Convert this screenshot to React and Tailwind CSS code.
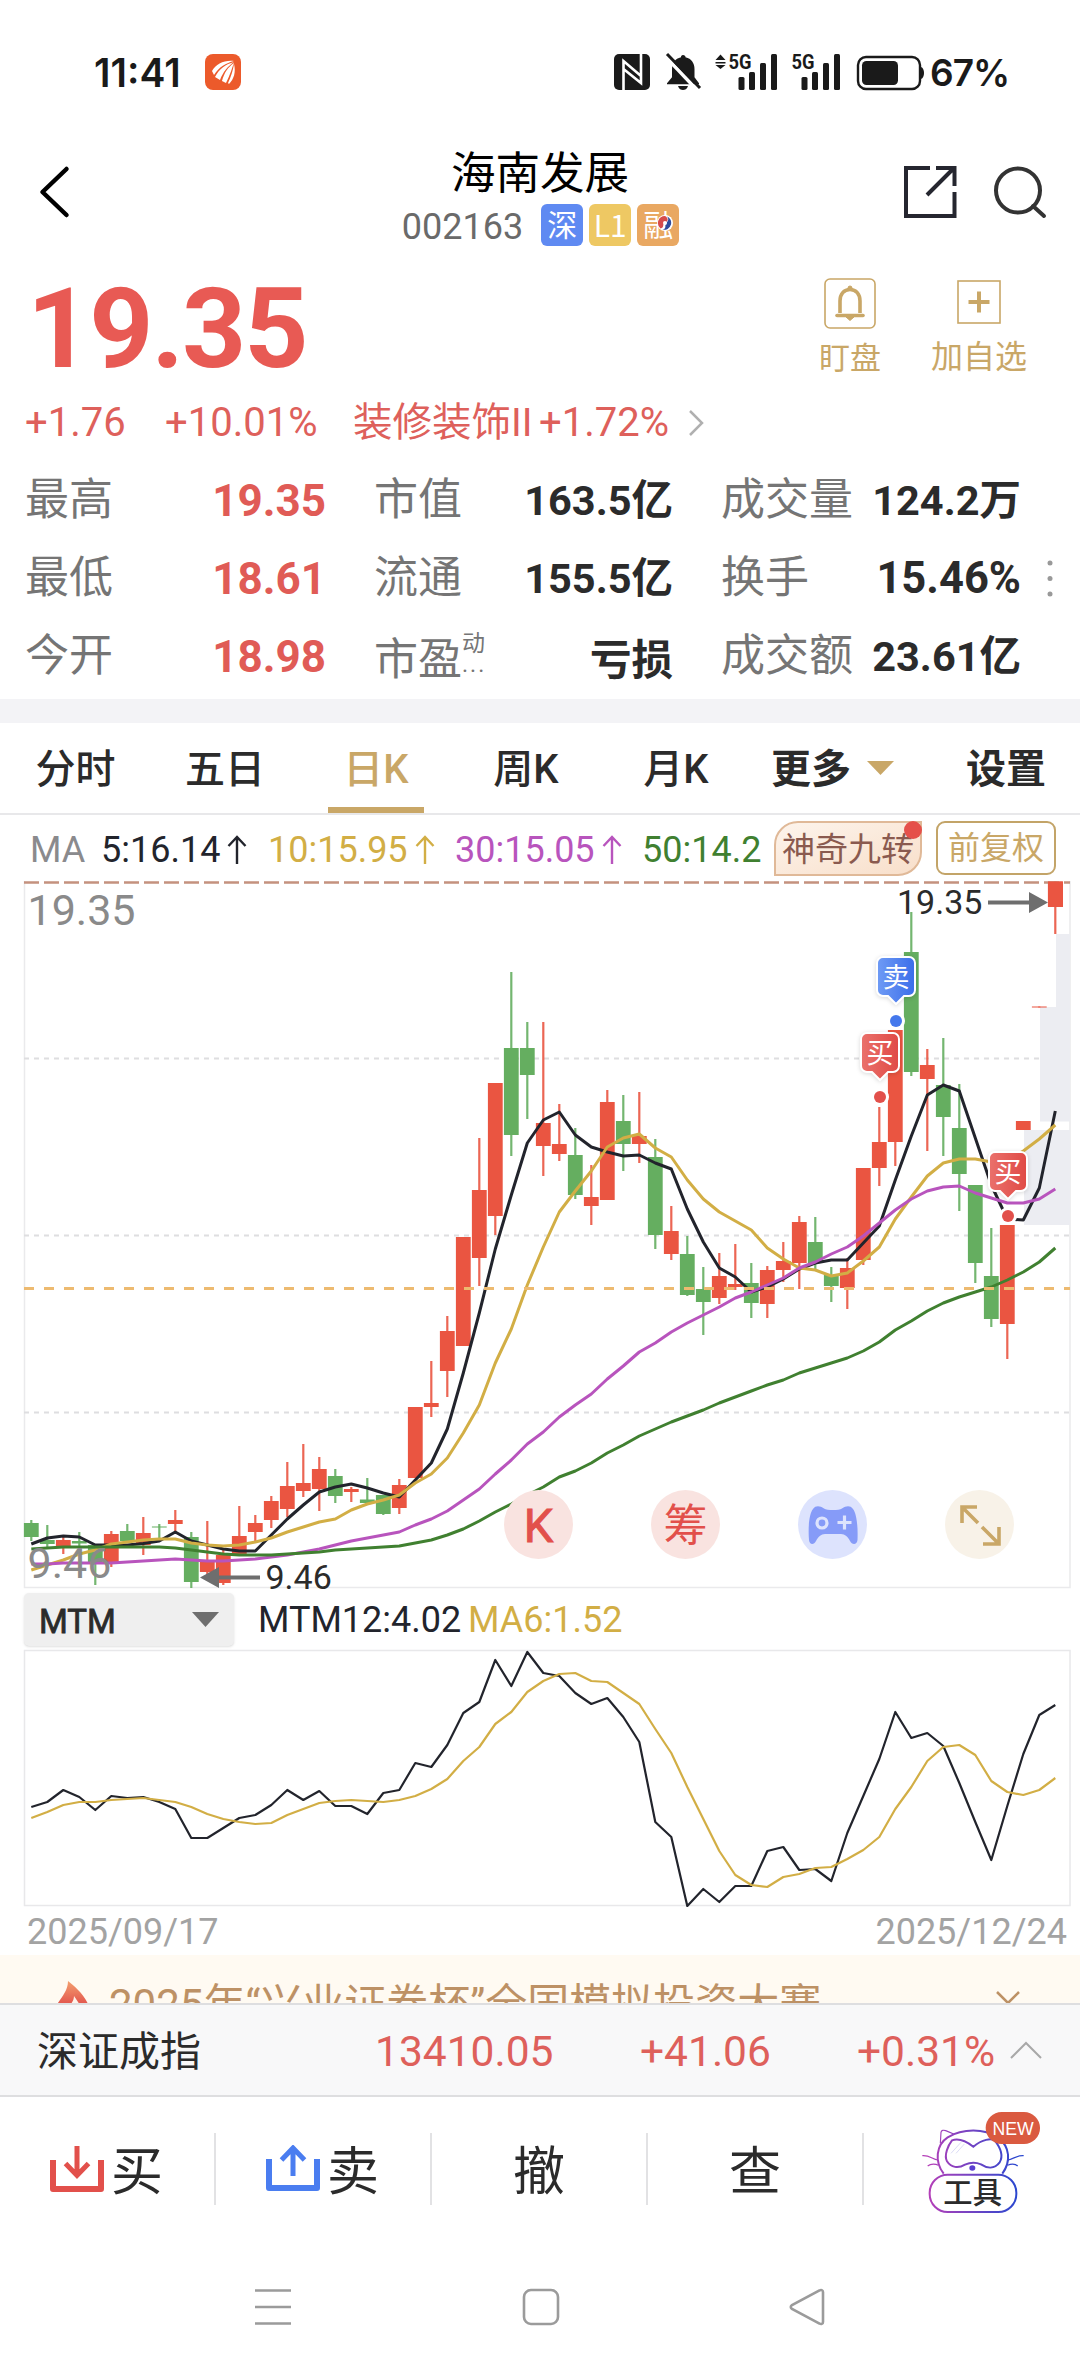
import clsx from 'clsx'

// Свечи: [цвет, верх тела, низ тела, верх тени, низ тени]
const candles = [
  ['g', 1523, 1537, 1520, 1541], ['g', 1540, 1544, 1525, 1548], ['r', 1540, 1546, 1537, 1554], ['g', 1541, 1543.5, 1532, 1546],
  ['g', 1545, 1562, 1545, 1585], ['r', 1534, 1562, 1531, 1567], ['g', 1531, 1541, 1524, 1543], ['r', 1533, 1545, 1517, 1555],
  ['g', 1526.5, 1527.5, 1524, 1541], ['r', 1520, 1524, 1510, 1532], ['g', 1537, 1582, 1532, 1588], ['r', 1562, 1572, 1521, 1575],
  ['r', 1555, 1583, 1550, 1585], ['r', 1536, 1554, 1506, 1554], ['r', 1523, 1532, 1515, 1541], ['r', 1501, 1520, 1496, 1528],
  ['r', 1486, 1509, 1462, 1517], ['r', 1483, 1491, 1444, 1497], ['r', 1469, 1489, 1457, 1511], ['g', 1476, 1496, 1469, 1503],
  ['r', 1489, 1492, 1487, 1502], ['g', 1499.5, 1503, 1478, 1503], ['g', 1495, 1514, 1495, 1515], ['r', 1485, 1508, 1479, 1514],
  ['r', 1407, 1478, 1407, 1478], ['r', 1403, 1407, 1361, 1417], ['r', 1331, 1371, 1316, 1397], ['r', 1237, 1346, 1237, 1346],
  ['r', 1190, 1258, 1138, 1286], ['r', 1083, 1216, 1083, 1235], ['g', 1048, 1135, 972, 1156], ['g', 1048, 1075, 1022, 1119],
  ['r', 1123, 1146, 1022, 1176], ['r', 1144, 1154, 1104, 1161], ['g', 1155, 1195, 1128, 1199], ['r', 1197, 1206, 1165, 1225],
  ['r', 1102, 1200, 1090, 1200], ['g', 1121, 1144, 1095, 1171], ['r', 1136, 1144, 1092, 1163], ['g', 1157, 1235, 1139, 1249],
  ['r', 1231, 1254, 1206, 1260], ['g', 1254, 1295, 1236, 1296], ['g', 1289, 1302, 1267, 1335], ['r', 1276, 1298, 1253, 1304],
  ['r', 1284, 1287, 1244, 1290], ['g', 1283, 1303, 1263, 1318], ['r', 1270, 1304, 1266, 1318], ['r', 1261, 1270, 1242, 1282],
  ['r', 1222, 1263, 1216, 1289], ['g', 1242, 1263, 1217, 1270], ['g', 1275, 1286, 1267, 1302], ['r', 1268, 1288, 1258, 1309],
  ['r', 1168, 1260, 1168, 1265], ['r', 1142, 1168, 1107, 1186], ['r', 1030, 1142, 1030, 1166], ['g', 952, 1072, 912, 1076],
  ['r', 1065, 1079, 1049, 1151], ['g', 1085, 1117, 1038, 1156], ['g', 1128, 1174, 1084, 1211], ['g', 1185, 1263, 1185, 1283],
  ['g', 1276, 1319, 1228, 1327], ['r', 1225, 1324, 1225, 1359], ['r', 1121, 1130, 1121, 1130], ['r', 1006.5, 1007.5, 1006.5, 1007.5],
  ['r', 881.5, 907, 881.5, 934],
]

const ma5 = [1544, 1538, 1536, 1537, 1545, 1545, 1545, 1543.5, 1541, 1532, 1541, 1545, 1549, 1551, 1551, 1535, 1519, 1505, 1492, 1487, 1484, 1488, 1493, 1497, 1480, 1463, 1429, 1373, 1313, 1249, 1195, 1143, 1120, 1112, 1135, 1147, 1152, 1156, 1155, 1163, 1169, 1209, 1242, 1268, 1277, 1292, 1287, 1279, 1269, 1263, 1260, 1260, 1243, 1226, 1180, 1136, 1095, 1085, 1091, 1138, 1185, 1219, 1220, 1188, 1111]
const ma10 = [1570, 1565, 1560, 1554, 1550, 1544, 1542, 1540, 1539, 1539, 1543, 1545, 1546, 1545, 1542, 1538, 1532, 1527, 1522, 1519, 1510, 1504, 1500, 1495, 1483, 1474, 1458, 1433, 1405, 1363, 1329, 1285, 1247, 1212, 1191, 1171, 1147, 1138, 1134, 1148, 1157, 1180, 1199, 1212, 1221, 1230, 1248, 1259, 1268, 1270, 1276, 1273, 1261, 1247, 1219, 1197, 1176, 1163, 1159, 1159, 1162, 1160, 1151, 1139, 1125]
const ma30 = [1564, 1564, 1563, 1563, 1563, 1563, 1562, 1561, 1560, 1559, 1560, 1561, 1561, 1560, 1559, 1557, 1555, 1552, 1549, 1545, 1541, 1538, 1535, 1532, 1525, 1519, 1511, 1500, 1489, 1474, 1460, 1444, 1432, 1417, 1405, 1394, 1379, 1366, 1352, 1343, 1332, 1323, 1315, 1307, 1298, 1292, 1285, 1278, 1268, 1262, 1254, 1247, 1236, 1223, 1210, 1199, 1191, 1187, 1186, 1193, 1198, 1203, 1203, 1199, 1189]
const ma50 = [1549, 1548, 1547, 1547, 1547, 1547, 1547, 1547, 1547, 1548, 1550, 1552, 1554, 1555, 1555, 1555, 1554, 1553, 1552, 1550, 1549, 1548, 1547, 1546, 1543, 1540, 1535, 1529, 1521, 1512, 1504, 1495, 1487, 1477, 1471, 1463, 1453, 1445, 1436, 1429, 1422, 1416, 1410, 1403, 1397, 1391, 1385, 1380, 1373, 1368, 1363, 1358, 1351, 1342, 1330, 1321, 1311, 1303, 1297, 1292, 1287, 1280, 1272, 1262, 1248]

const mtm12 = [1807, 1802, 1790, 1797, 1810, 1796, 1798, 1797, 1802, 1809, 1838, 1838, 1828, 1818, 1815, 1805, 1790, 1800, 1791, 1806, 1806, 1814, 1793, 1790, 1763, 1767, 1745, 1713, 1702, 1660, 1686, 1652, 1673, 1676, 1693, 1704, 1698, 1717, 1742, 1822, 1837, 1906, 1889, 1902, 1886, 1886, 1851, 1847, 1870, 1869, 1881, 1833, 1796, 1759, 1712, 1738, 1733, 1746, 1783, 1822, 1860, 1806, 1754, 1715, 1705]
const mtmMa6 = [1818, 1812, 1805, 1802, 1802, 1800, 1799, 1798, 1800, 1802, 1807, 1814, 1819, 1822, 1824, 1823, 1815, 1809, 1803, 1801, 1800, 1801, 1802, 1800, 1796, 1789, 1779, 1761, 1747, 1724, 1712, 1692, 1681, 1674, 1673, 1681, 1682, 1693, 1704, 1729, 1753, 1787, 1819, 1851, 1875, 1885, 1887, 1877, 1874, 1868, 1867, 1859, 1850, 1837, 1809, 1787, 1761, 1747, 1745, 1755, 1781, 1792, 1795, 1790, 1778]

const STEP = 16
const xAt = (i) => 31.3 + i * STEP
const toPoints = (ys) => ys.map((y, i) => `${xAt(i)},${y}`).join(' ')

const stats = [
  [['最高', '19.35'], ['市值', '163.5亿'], ['成交量', '124.2万']],
  [['最低', '18.61'], ['流通', '155.5亿'], ['换手', '15.46%']],
  [['今开', '18.98'], ['市盈', '亏损'], ['成交额', '23.61亿']],
]

const tabs = [
  { id: 'time', label: '分时', cls: 'w-[151px] font-medium' },
  { id: 'five', label: '五日', cls: 'w-[148px] font-medium' },
  { id: 'day', label: '日K', cls: 'w-[154px] font-medium' },
  { id: 'week', label: '周K', cls: 'w-[146px] font-medium' },
  { id: 'month', label: '月K', cls: 'w-[154px] font-medium' },
]

const Signal = () => (
  <>
    <rect x="0" y="23" width="6" height="13" rx="1.5" />
    <rect x="10.5" y="18" width="6" height="18" rx="1.5" />
    <rect x="21.5" y="9" width="6" height="27" rx="1.5" />
    <rect x="32.5" y="0" width="6" height="36" rx="1.5" />
  </>
)

const StatusBar = () => (
  <div className="flex h-36 items-center pl-[94px] text-[#1a1a1a]">
    <span className="w-[111px] font-[Inter] text-[39px] font-semibold">11:41</span>
    <svg className="size-9" viewBox="0 0 36 36">
      <rect width="36" height="36" rx="8" fill="#ec5a2b" />
      <path d="M7 17C11 10 19 6 29 7C21 9 14 13 9 21Z M10 23C14 15 21 10 29 8C23 12 18 18 15 26Z M17 27C19 19 23 13 29 9C27 14 25 21 21 29Z M23 29C26 23 28 16 29 10C31 18 29 25 24 30Z" fill="#fff" />
    </svg>
    <svg className="ml-auto h-[50px] w-[314px]" viewBox="613 47 314 50" fill="#1a1a1a">
      <rect x="614" y="54" width="36" height="36" rx="5" />
      <path d="M623.5 90V61L641 76M641 54V83L623.5 69" fill="none" stroke="#fff" strokeWidth="2.6" />
      <path d="M683 55c1.600 0 2.500 1 2.500 2.200c6 1.400 9 6 9 12v8l4.500 6v1H667v-1l5-6v-8c0-6 3-10.600 9-12c0-1.200.5-2.200 2-2.200zM678 86h10c-1 3-3 4-5 4s-4-1-5-4z" />
      <path d="M664 55l34 36" stroke="#fff" strokeWidth="3.500" />
      <path d="M667 54l33 34" stroke="#1a1a1a" strokeWidth="3" />
      <path d="M715.500 60l5-5.500l5 5.500zM715.500 62h10v1.500h-10zM715.500 65h10l-5 4z" />
      <text x="728.500" y="69" className="font-[Roboto] text-[20px] font-bold" textLength="23" lengthAdjust="spacingAndGlyphs">5G</text>
      <g transform="translate(738.500 54)"><Signal /></g>
      <text x="791.500" y="69" className="font-[Roboto] text-[20px] font-bold" textLength="23" lengthAdjust="spacingAndGlyphs">5G</text>
      <g transform="translate(801.500 54)"><Signal /></g>
      <rect x="858" y="57" width="62" height="32" rx="8" fill="none" stroke="#1a1a1a" strokeWidth="2.400" />
      <rect x="862" y="61" width="36" height="24" rx="4.500" />
      <path d="M921 67c4 1 4 11 0 12z" />
    </svg>
    <span className="w-[153px] pl-[3px] font-[Inter] text-[37px] font-semibold tracking-[-1px]">67%</span>
  </div>
)

const Header = () => (
  <div className="grid h-[102px] grid-cols-[270px_1fr_270px]">
    <svg className="ml-[36px] mt-5 h-14 w-9" viewBox="0 0 36 56" fill="none" stroke="#000" strokeWidth="4.500" strokeLinecap="round" strokeLinejoin="round">
      <path d="M30.500 5L6.500 28L30.500 51" />
    </svg>
    <div className="flex flex-col items-center pt-[8px]">
      <div className="h-[44px] text-[44.5px] leading-[44px] text-black">海南发展</div>
      <div className="mt-[8px] flex h-[42px] items-center gap-1.5 pl-[1px] text-[30px] leading-[43px] text-white">
        <span className="mr-[12px] mt-1 text-[36px] text-[#6a6a6a]">002163</span>
        <span className="size-[42px] rounded-[6px] bg-[#5f8af2] text-center">深</span>
        <span className="size-[42px] rounded-[6px] bg-[#eec863] text-center font-['Noto_Sans_CJK_SC'] leading-[40px]">L1</span>
        <span className="relative size-[42px] rounded-[6px] bg-[#e9a862] text-center">
          融
          <svg className="absolute left-[20px] top-[11px] size-4" viewBox="0 0 16 16">
            <circle cx="8" cy="8" r="8" fill="#fff" />
            <path d="M8 1A7 7 0 0 0 3.500 13.400C7.500 13 5 9 8 8S12 3 8 1z" fill="#d64b4b" />
            <path d="M9.500 1.200A7 7 0 0 1 5.500 14.600C10 14 7.500 10 9 8.500S13 4 9.500 1.200z" fill="#2f4a9c" />
            <circle cx="8" cy="8" r="2" fill="#fff" />
          </svg>
        </span>
      </div>
    </div>
    <svg className="ml-[90px] mt-[18px] h-[60px] w-[150px]" viewBox="900 162 150 60" fill="none" stroke="#25262f" strokeWidth="4">
      <path d="M930 168H906V216H954.500V192M936 168H954.500V186M954 168L927 195" />
      <circle cx="1018" cy="190.500" r="22" stroke="#333" />
      <path d="M1033 206l11 10" stroke="#333" strokeLinecap="round" />
    </svg>
  </div>
)

const Price = () => (
  <div className="flex h-[150px] justify-between pr-[53px] text-[#c9a767]">
    <div className="mt-[14px] pl-[27px] text-[112px] font-bold leading-[138px] tracking-[-2px] text-[#e85a54]">19.35</div>
    <div className="flex">
      <div className="flex w-[62px] flex-col items-center pt-[32px]">
        <svg className="h-[51px] w-[52px]" viewBox="0 0 52 51" fill="none" stroke="#c9a767">
          <rect x="1" y="1" width="50" height="49" rx="5" strokeWidth="1.600" />
          <path d="M16 35V23C16 16 20 11.500 26 11.500S36 16 36 23V35" strokeWidth="3.600" />
          <path d="M13 37.500H39" strokeWidth="3.600" strokeLinecap="round" />
          <path d="M22 39h8l-4 3.500zM24 10a2 2 0 1 1 4 0z" fill="#c9a767" />
        </svg>
        <span className="mt-[13px] text-[31px] leading-[34px]">盯盘</span>
      </div>
      <div className="ml-[50px] flex w-[96px] flex-col items-center pt-[34px]">
        <svg className="size-[44px]" viewBox="0 0 44 44" fill="none" stroke="#c9a767">
          <rect x="1" y="1" width="42" height="42" strokeWidth="1.600" />
          <path d="M11.500 22H32.500M22 11.500V32.500" strokeWidth="4" />
        </svg>
        <span className="mt-[16px] text-[32px] leading-[34px]">加自选</span>
      </div>
    </div>
  </div>
)

const ChangeRow = () => (
  <div className="flex h-[51px] items-center pl-[25px] pt-[3px] text-[40px] text-[#de605b]">
    <span className="w-[140px]">+1.76</span>
    <span className="w-[188px]">+10.01%</span>
    <span className="w-[186px] text-[39.5px]">装修装饰II</span>
    <span>+1.72%</span>
    <svg className="ml-[18px] h-7 w-[18px]" viewBox="0 0 18 28" fill="none" stroke="#b0b0b0" strokeWidth="2.500">
      <path d="M3 2L15 14L3 26" />
    </svg>
  </div>
)

const Stats = () => (
  <div className="flex h-[252px] pl-[25px] pt-[14px]">
    <div className="w-[996px]">
      {stats.map((row, r) => (
        <div key={row[0][0]} className="grid h-[78px] grid-cols-[301px_347px_348px]">
          {row.map(([label, value], c) => (
            <div
              key={label}
              className={clsx('flex items-center justify-between', c === 1 && 'pl-[48px]', c === 2 && 'pl-[48px]', r === 2 && c === 1 && 'pt-[8px]')}
            >
              <span className="flex whitespace-nowrap text-[44px] leading-[44px] text-[#757575]">
                {label}
                {label === '市盈' && (
                  <span className="flex flex-col text-[23px] leading-[22px]">
                    <span className="-mt-[5px]">动</span>
                    <span className="-mt-px tracking-[2px]">...</span>
                  </span>
                )}
              </span>
              <span
                className={clsx(
                  'whitespace-nowrap pt-[1px] font-bold leading-[44px]',
                  c === 0 ? 'text-[44px] text-[#e05b56]' : 'text-[#2b2b2b]',
                  c > 0 && (value.endsWith('%') ? 'text-[43.5px]' : 'text-[41.5px]')
                )}
              >
                {value}
              </span>
            </div>
          ))}
        </div>
      ))}
    </div>
    <svg className="ml-[25px] mt-[98px] h-10 w-2" viewBox="0 0 8 40" fill="#999">
      <circle cx="4" cy="4" r="2.500" />
      <circle cx="4" cy="19.500" r="2.500" />
      <circle cx="4" cy="35" r="2.500" />
    </svg>
  </div>
)

const Tabs = () => (
  <div className="flex h-[92px] border-b-2 border-[#e8e8ea] text-[40px] leading-[92px] text-[#2b2b2b]">
    {tabs.map((tab) => (
      <div key={tab.id} className={clsx('flex justify-center', tab.cls, tab.id === 'day' && 'text-[#c9a767]')}>
        <span className={clsx('h-[90px] whitespace-nowrap pt-[1px]', tab.id === 'day' && 'w-[96px] border-b-[6px] border-[#c9a767] text-center')}>{tab.label}</span>
      </div>
    ))}
    <div className="ml-[18px] flex w-[195px] items-center pt-[3px] font-bold">
      更多
      <svg className="-mt-1 ml-4 h-[14px] w-[27px]" viewBox="0 0 27 14" fill="#c9a767"><path d="M0 0H27L13.500 14z" /></svg>
    </div>
    <div className="pt-[1px] font-bold">设置</div>
  </div>
)

const Up = () => (
  <svg className="ml-[7px] h-[30px] w-5" viewBox="0 0 20 30" fill="none" stroke="currentColor" strokeWidth="2.400">
    <path d="M10 29V2M1.500 11L10 2L18.500 11" />
  </svg>
)

const MaRow = () => (
  <div className="flex h-[66px] items-center pl-[30px] text-[36px]">
    <span className="w-[71px] pt-[3px] text-[#8a8a8d]">MA</span>
    <span className="flex w-[167px] items-center pt-[3px] text-[#22242c]">5:16.14<Up /></span>
    <span className="flex w-[187px] items-center pt-[3px] text-[#d2ae45]">10:15.95<Up /></span>
    <span className="flex w-[187px] items-center pt-[3px] text-[#b854bd]">30:15.05<Up /></span>
    <span className="w-[132px] pt-[3px] text-[#408030]">50:14.2</span>
    <div className="relative h-[55px] w-[148px] rounded-br-[24px] rounded-tl-[24px] border-2 border-[#e0b998] bg-linear-to-br from-[#fdf4ec] to-[#f8dfca] text-center text-[33px] leading-[54px] text-[#8a5a4f]">
      神奇九转
      <span className="absolute -right-[2px] -top-[2px] size-[18px] rounded-full bg-[#e5504a]" />
    </div>
    <div className="ml-[14px] h-[54px] w-[120px] rounded-[9px] border-2 border-[#c3a468] text-center text-[32px] leading-[51px] text-[#c9a767]">前复权</div>
  </div>
)

const Marker = ({ x, y, text, kind }) => (
  <g>
    <path
      d={`M${x - 13} ${y}h26a6 6 0 0 1 6 6v27a6 6 0 0 1 -6 6h-5l-8 8l-8 -8h-5a6 6 0 0 1 -6 -6v-27a6 6 0 0 1 6 -6z`}
      fill={kind === 'sell' ? 'url(#sell)' : 'url(#buy)'}
      stroke="#fff"
      strokeWidth="2"
      className="drop-shadow-sm"
    />
    <text x={x} y={y + 30} textAnchor="middle" fill="#fff" className="text-[27px]">{text}</text>
    <circle cx={x} cy={y + 64} r="9" fill="#fff" />
    <circle cx={x} cy={y + 64} r="6" fill={kind === 'sell' ? '#4478ec' : '#e2504b'} />
  </g>
)

const tool = 'flex size-[69px] items-center justify-center rounded-full'

const KChart = () => (
  <div className="relative h-[712px]">
    <svg className="block h-[712px] w-[1080px] overflow-visible" viewBox="0 881 1080 712">
      <defs>
        <linearGradient id="sell"><stop stopColor="#6f9bf5" /><stop offset="1" stopColor="#3b6eea" /></linearGradient>
        <linearGradient id="buy"><stop stopColor="#ea716c" /><stop offset="1" stopColor="#e04a45" /></linearGradient>
      </defs>
      <path d="M24.500 881V1587.500H1070V881" fill="none" stroke="#eaeaec" strokeWidth="1.500" />
      <path d="M24 1058.500H1070M24 1235.500H1070M24 1412.500H1070" stroke="#dedee0" strokeWidth="2" strokeDasharray="5 5" />
      <path d="M1056 934H1070V1007H1056zM1040 1007H1070V1121.500H1040zM1024 1130H1070V1225H1024z" fill="#ecedf2" />
      {candles.map(([color, top, bottom, high, low], i) => {
        const fill = color === 'r' ? '#ea5541' : '#65ae60'
        return (
          <g key={i} fill={fill}>
            <rect x={xAt(i) - 1.1} y={high} width="2.2" height={low - high} opacity="0.9" />
            <rect x={xAt(i) - 7.4} y={top} width="14.8" height={bottom - top} />
          </g>
        )
      })}
      <g fill="none" strokeWidth="3" strokeLinejoin="round">
        <polyline points={toPoints(ma5)} stroke="#22242c" />
        <polyline points={toPoints(ma10)} stroke="#d2ae45" />
        <polyline points={toPoints(ma30)} stroke="#b854bd" />
        <polyline points={toPoints(ma50)} stroke="#408030" />
      </g>
      <path d="M24 882.500H1070" stroke="#c4917e" strokeWidth="2.400" strokeDasharray="15 5" />
      <path d="M24 1288.500H1070" stroke="#edba70" strokeWidth="3" strokeDasharray="10 10" />
      <rect x="1048" y="881.500" width="15" height="25.500" fill="#ea5541" />
      <g className="text-[43px]" fill="#8a8a8a">
        <text x="27.500" y="925">19.35</text>
        <text x="27.500" y="1578">9.46</text>
      </g>
      <g className="text-[34px]" fill="#2b2b2b">
        <text x="897" y="914">19.35</text>
        <text x="265.500" y="1589">9.46</text>
      </g>
      <g fill="#6e6e6e">
        <path d="M988 900.500H1029V892L1048 902.500L1029 913V904.500H988z" />
        <path d="M260 1575.500H219V1567L200 1577.500L219 1588V1579.500H260z" />
      </g>
      <Marker x={880} y={1033} text="买" kind="buy" />
      <Marker x={896} y={957} text="卖" kind="sell" />
      <Marker x={1008} y={1152} text="买" kind="buy" />
    </svg>
    <div className="absolute left-[504px] top-[609px] flex gap-[78px]">
      <div className={clsx(tool, 'bg-[#f9e3e0] pt-[2px] text-[47px] text-[#e2504b] [-webkit-text-stroke:1px]')}>K</div>
      <div className={clsx(tool, 'bg-[#f9e3e0] pt-[3px] text-[44px] leading-none text-[#e2504b]')}>筹</div>
      <div className={clsx(tool, 'bg-[#dde3fd]')}>
        <svg className="h-[38px] w-[50px]" viewBox="0 0 50 38">
          <path d="M1 34C0 22 1 8 5 3C8-1 12 0 16 2.500C19 4.500 31 4.500 34 2.500C38 0 42-1 45 3C49 8 50 22 49.500 34C49 39 44 39 42 35C40 31 37 28 33 28H17C13 28 10 31 8 35C6 39 1.500 39 1 34Z" fill="#869bf8" />
          <circle cx="14" cy="17" r="5" fill="none" stroke="#dde3fd" strokeWidth="3.200" />
          <path d="M29.500 16.500H43.500M36.500 9.500V23.500" stroke="#dde3fd" strokeWidth="3.200" />
        </svg>
      </div>
      <div className={clsx(tool, 'bg-[#f8f2e8]')}>
        <svg className="size-[42px]" viewBox="0 0 42 42" fill="none" stroke="#c9a767" strokeWidth="3.600">
          <path d="M18 3H3V19M3 3L19 19M23 23L40 40M24 40H40V23" />
        </svg>
      </div>
    </div>
  </div>
)

const Indicator = () => (
  <>
    <div className="flex h-[53px] items-center pl-[24px] text-[36px]">
      <div className="flex h-[53px] w-[210px] items-center justify-between rounded-[5px] bg-[#efefef] px-[15px] text-[33px] text-[#2b2b2b] shadow [-webkit-text-stroke:0.8px]">
        <span className="pt-[3px]">MTM</span>
        <svg className="h-[15px] w-[27px]" viewBox="0 0 27 15" fill="#6e6e6e"><path d="M0 0H27L13.500 15z" /></svg>
      </div>
      <span className="ml-[24px] w-[210px] pt-[1px] text-[#22242c]">MTM12:4.02</span>
      <span className="pt-[1px] text-[#d2ae45]">MA6:1.52</span>
    </div>
    <svg className="block h-[264px] w-[1080px]" viewBox="0 1646 1080 264">
      <rect x="24.500" y="1650.500" width="1045.500" height="255" fill="none" stroke="#e8e8ea" strokeWidth="1.500" />
      <g fill="none" strokeWidth="2.200" strokeLinejoin="round">
        <polyline points={toPoints(mtm12)} stroke="#22242c" />
        <polyline points={toPoints(mtmMa6)} stroke="#d2ae45" />
      </g>
    </svg>
    <div className="flex h-[45px] justify-between pl-[27px] pr-[13px] text-[36px] leading-[45px] text-[#a3a3a3]">
      <span>2025/09/17</span>
      <span>2025/12/24</span>
    </div>
  </>
)

const Banner = () => (
  <div className="flex h-[48px] overflow-hidden bg-[#fffaf2] pl-[50px] text-[#bd9165]">
    <svg className="mt-[26px] h-[50px] w-[44px] shrink-0" viewBox="0 0 44 50">
      <defs>
        <linearGradient id="flame" x2="0" y2="1"><stop stopColor="#f3a06f" /><stop offset="0.5" stopColor="#e2504b" /></linearGradient>
      </defs>
      <path d="M18 0C25 6 39 16 41 34C41 44 32 50 22 50S2 44 3 34C4 22 18 14 18 0z" fill="url(#flame)" />
      <path d="M24 15c3 5 8 9 6 17c-2 5-12 4-12-2s6-8 6-15z" fill="#fff3ea" />
    </svg>
    <span className="ml-[15px] mt-[22px] shrink-0 whitespace-nowrap text-[42px] leading-[56px]">2025年“兴业证券杯”全国模拟投资大赛</span>
    <svg className="ml-auto mr-[58px] mt-[35px] h-7 w-7 shrink-0" viewBox="0 0 28 28" fill="none" stroke="#bd9165" strokeWidth="2.500">
      <path d="M3 2L14 13L25 2" />
    </svg>
  </div>
)

const IndexBar = () => (
  <div className="flex h-[94px] items-center border-y-2 border-[#dedee0] bg-[#f8f8f9] pl-[37px] text-[42.5px] text-[#de605b]">
    <span className="w-[338px] pt-[4px] text-[41px] text-[#2b2b2b]">深证成指</span>
    <span className="w-[265px] pt-[4px]">13410.05</span>
    <span className="w-[217px] pt-[4px]">+41.06</span>
    <span className="w-[152px] pt-[4px]">+0.31%</span>
    <svg className="h-[18px] w-[34px]" viewBox="0 0 34 18" fill="none" stroke="#a8a8a8" strokeWidth="2">
      <path d="M2 17L17 2L32 17" />
    </svg>
  </div>
)

const ToolsIcon = () => (
  <svg className="h-[105px] w-[120px]" viewBox="60 30 360 315" fill="none" stroke="url(#cat)" strokeWidth="6">
    <defs>
      <linearGradient id="cat" gradientUnits="userSpaceOnUse" x1="84" y1="0" x2="348" y2="0"><stop stopColor="#b43fb8" /><stop offset="1" stopColor="#2b48cf" /></linearGradient>
    </defs>
    <path d="M128 221C100 185 105 135 140 112C185 85 250 85 290 112C328 140 330 185 304 221" />
    <path d="M118 130L120 97C121 90 128 90 134 92L160 103" strokeWidth="3.500" />
    <path d="M217 140C245 117 270 115 281 121C300 145 306 170 296 187C280 208 258 205 240 193C225 187 208 187 192 194C172 206 150 203 138 184C128 165 142 135 153 121C170 115 195 123 217 140z" />
    <path d="M150 160L180 127M165 160L190 132" stroke="#dcdcf6" strokeWidth="3" />
    <path d="M64 167C85 165 95 178 110 180M80 198C90 190 105 192 112 196M368 167C347 165 337 178 320 180M350 198C342 190 328 192 320 196" strokeWidth="3.500" />
    <ellipse cx="214" cy="204" rx="9" ry="8" fill="#5a3fd0" stroke="none" />
    <rect x="86" y="224" width="260" height="112" rx="54" fill="#fff" />
    <text x="215" y="309" textAnchor="middle" fill="#2b2b2b" stroke="none" className="text-[88px] font-medium">工具</text>
    <rect x="254" y="36" width="163" height="96" rx="48" fill="#da5a40" stroke="none" />
    <text x="336" y="104" textAnchor="middle" fill="#fff" stroke="none" className="font-['Liberation_Sans'] text-[53px]">NEW</text>
  </svg>
)

const cell = 'flex h-[72px] items-center justify-center'

const Actions = () => (
  <div className="grid h-[144px] grid-cols-5 items-center divide-x-2 divide-[#e2e2e4] text-[52px] leading-none text-[#2b2b2b]">
    <div className={clsx(cell, 'pr-[2px]')}>
      <svg className="mr-[6px] h-[48px] w-[56px]" viewBox="0 0 56 48" fill="none" stroke="#e2504b" strokeWidth="6" strokeLinejoin="round">
        <path d="M4 15V44H52V15" />
        <path d="M28 1V30M16.500 18.500L28 30.500L39.500 18.500" strokeWidth="5" strokeLinejoin="miter" />
      </svg>
      <span className="mt-[7px]">买</span>
    </div>
    <div className={clsx(cell, 'pr-[2px]')}>
      <svg className="mr-[6px] h-[48px] w-[56px]" viewBox="0 0 56 48" fill="none" stroke="#4a7df0" strokeWidth="6" strokeLinejoin="round">
        <path d="M4 14V43H52V14" />
        <path d="M28 31V4M16.500 15L28 3L39.500 15" strokeWidth="5" strokeLinejoin="miter" />
      </svg>
      <span className="mt-[7px]">卖</span>
    </div>
    <div className={cell}><span className="mt-[7px]">撤</span></div>
    <div className={cell}><span className="mt-[7px]">查</span></div>
    <div className={clsx(cell, 'pl-[18px]')}>
      <div className="-mt-[14px]"><ToolsIcon /></div>
    </div>
  </div>
)

const NavBar = () => (
  <svg className="block h-[132px] w-[1080px]" viewBox="0 2241 1080 132" fill="none" stroke="#9b9b9b" strokeWidth="2.600">
    <path d="M255 2290.500H291M255 2307H291M255 2323.500H291" />
    <rect x="524" y="2290" width="34" height="34" rx="7" />
    <path d="M823 2292V2322C823 2324 821 2324.500 819.500 2323.500L792 2309Q789.500 2307 792 2305L819.500 2290.500C821 2289.500 823 2290 823 2292z" />
  </svg>
)

const App = () => (
  <div className="w-[1080px] overflow-hidden bg-white font-['Roboto','Noto_Sans_CJK_SC',sans-serif] leading-none">
    <StatusBar />
    <Header />
    <Price />
    <ChangeRow />
    <Stats />
    <div className="h-6 bg-[#f3f3f6]" />
    <Tabs />
    <MaRow />
    <KChart />
    <Indicator />
    <Banner />
    <IndexBar />
    <Actions />
    <NavBar />
  </div>
)

export default App
